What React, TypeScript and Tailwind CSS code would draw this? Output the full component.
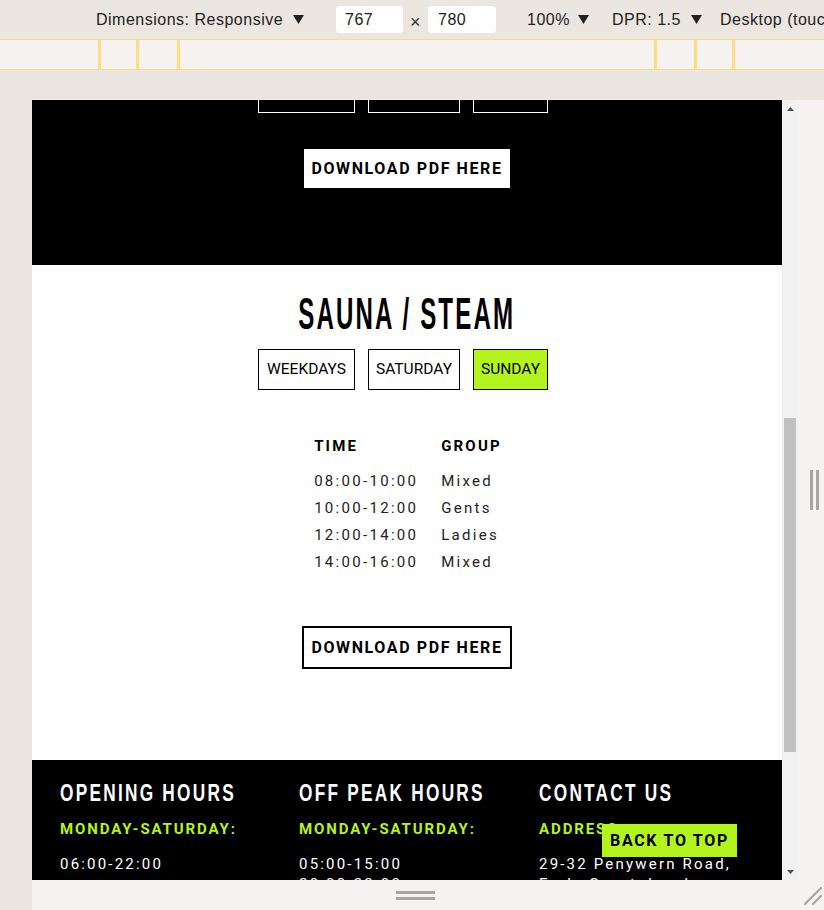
import clsx from 'clsx'

const days = [
  { name: 'WEEKDAYS', w: 'w-[97px]' },
  { name: 'SATURDAY', w: 'w-[92px]' },
  { name: 'SUNDAY', w: 'w-[75px]' },
]

const sessions = [
  { time: '08:00-10:00', group: 'Mixed' },
  { time: '10:00-12:00', group: 'Gents' },
  { time: '12:00-14:00', group: 'Ladies' },
  { time: '14:00-16:00', group: 'Mixed' },
]

function Caret() {
  return (
    <svg width="11" height="9" viewBox="0 0 11 9" className="shrink-0">
      <path d="M0 0 H11 L5.5 9 Z" fill="#222" />
    </svg>
  )
}

function Tabs({ dark, active }: { dark?: boolean; active?: string }) {
  return (
    <div className="flex gap-[13px] -ml-[8px]">
      {days.map(d => (
        <button
          key={d.name}
          className={clsx(
            'h-[41px] border text-[15.5px] leading-none flex items-center justify-center',
            d.w,
            dark ? 'border-white text-white' : 'border-black text-black',
            !dark && d.name === active && 'bg-[#b4f41e]'
          )}
        >
          {d.name}
        </button>
      ))}
    </div>
  )
}

function FooterCol({ title, label, lines, next }: { title: string; label: string; lines: string[]; next?: string }) {
  return (
    <div className="flex flex-col">
      <h3 className="font-['Liberation_Sans',sans-serif] font-bold text-[23px] leading-[23px] tracking-[3px] text-white whitespace-nowrap origin-left scale-x-[0.75]">
        {title}
      </h3>
      <div className="mt-[14px] h-[20px] leading-[20px] text-[15px] font-bold tracking-[1.9px] text-[#b4f41e]">{label}</div>
      <div className="mt-[15px] flex flex-col text-[15px] leading-[20px] tracking-[2.2px] text-white">
        {lines.map(l => (
          <span key={l} className="whitespace-nowrap">{l}</span>
        ))}
      </div>
      {next && (
        <div className="mt-[24px] h-[20px] leading-[20px] text-[15px] font-bold tracking-[1.9px] text-[#b4f41e]">{next}</div>
      )}
    </div>
  )
}

export default function App() {
  return (
    <div className="w-[824px] h-[910px] overflow-hidden bg-[#ece6e0] flex flex-col font-['Liberation_Sans',sans-serif] text-[#222]">
      {/* devtools toolbar */}
      <div className="h-[39px] shrink-0 flex items-center pl-[96px] text-[16px] tracking-[0.5px] whitespace-nowrap">
        <div className="w-[208px] flex items-center gap-[10px] shrink-0">
          <span>Dimensions: Responsive</span>
          <Caret />
        </div>
        <div className="ml-[32px] w-[67px] h-[27px] bg-white rounded-[4px] flex items-center pl-[9px] shrink-0">767</div>
        <span className="w-[25px] text-center text-[18px] leading-none text-[#333] pt-[5px] shrink-0">×</span>
        <div className="w-[68px] h-[27px] bg-white rounded-[4px] flex items-center pl-[10px] shrink-0">780</div>
        <div className="ml-[31px] w-[85px] flex items-center gap-[8px] shrink-0">
          <span>100%</span>
          <Caret />
        </div>
        <div className="w-[108px] flex items-center gap-[10px] shrink-0">
          <span>DPR: 1.5</span>
          <Caret />
        </div>
        <span>Desktop (touch)</span>
      </div>

      {/* ruler */}
      <div className="h-[31px] shrink-0 bg-[#f6f2f1] border-y border-[#f7dc88] flex">
        <div className="ml-[98px] w-[3px] bg-[#fcdf7c]" />
        <div className="ml-[35px] w-[3px] bg-[#fcdf7c]" />
        <div className="ml-[38px] w-[3px] bg-[#fcdf7c]" />
        <div className="ml-[474px] w-[3px] bg-[#fcdf7c]" />
        <div className="ml-[37px] w-[3px] bg-[#fcdf7c]" />
        <div className="ml-[35px] w-[3px] bg-[#fcdf7c]" />
      </div>

      <div className="h-[30px] shrink-0" />

      {/* viewport row */}
      <div className="h-[780px] shrink-0 flex">
        <div className="w-8 shrink-0" />
        <div className="w-[750px] shrink-0 h-full bg-white overflow-hidden relative font-['Roboto',sans-serif]">
          <div className="-mt-[28px]">
            {/* previous timetable, scrolled past */}
            <section className="bg-black pb-[77px] flex flex-col items-center">
              <Tabs dark />
              <button className="mt-[36px] h-[39px] w-[206px] bg-white text-black text-[16px] font-bold tracking-[1.6px]">
                DOWNLOAD PDF HERE
              </button>
            </section>

            {/* sauna / steam */}
            <section className="bg-white h-[495px] pt-[26px] flex flex-col items-center">
              <h2 className="font-['Liberation_Sans',sans-serif] font-bold text-[45px] leading-[45px] tracking-[4px] text-black whitespace-nowrap scale-x-[0.535]">
                SAUNA / STEAM
              </h2>
              <div className="mt-[13px]">
                <Tabs active="SUNDAY" />
              </div>
              <div className="mt-[46px] grid grid-cols-[127px_auto] text-[15px] pl-[2px]">
                <div className="h-[20px] leading-[20px] font-bold tracking-[2.2px] text-black mb-[12px]">TIME</div>
                <div className="h-[20px] leading-[20px] font-bold tracking-[2.2px] text-black mb-[12px]">GROUP</div>
                {sessions.map(s => (
                  <div key={s.time} className="contents">
                    <div className="h-[27px] leading-[27px] tracking-[2.3px] text-[#222]">{s.time}</div>
                    <div className="h-[27px] leading-[27px] tracking-[2.3px] text-[#222]">{s.group}</div>
                  </div>
                ))}
              </div>
              <button className="mt-[50px] h-[43px] w-[210px] border-2 border-black bg-white text-black text-[16px] font-bold tracking-[1.6px]">
                DOWNLOAD PDF HERE
              </button>
            </section>

            {/* footer */}
            <footer className="bg-black h-[260px] pt-[22px] pl-[28px] grid grid-cols-[239px_240px_1fr]">
              <FooterCol title="OPENING HOURS" label="MONDAY-SATURDAY:" lines={['06:00-22:00']} next="SUNDAY:" />
              <FooterCol title="OFF PEAK HOURS" label="MONDAY-SATURDAY:" lines={['05:00-15:00', '20:00-22:00']} />
              <FooterCol title="CONTACT US" label="ADDRESS:" lines={['29-32 Penywern Road,', 'Earls Court, London']} />
            </footer>
          </div>

          <button className="absolute right-[45px] bottom-[23px] h-[33px] w-[135px] bg-[#b4f41e] text-black text-[16px] font-bold tracking-[1.7px]">
            BACK TO TOP
          </button>
        </div>

        {/* scrollbar */}
        <div className="w-4 shrink-0 bg-[#f1f1f1] flex flex-col">
          <div className="h-[17px] flex items-center justify-center">
            <svg width="7" height="4" viewBox="0 0 7 4"><path d="M0 4 L3.5 0 L7 4 Z" fill="#505050" /></svg>
          </div>
          <div className="flex-1">
            <div className="mt-[301px] mx-[2px] h-[334px] bg-[#c1c1c1]" />
          </div>
          <div className="h-[17px] flex items-center justify-center">
            <svg width="7" height="4" viewBox="0 0 7 4"><path d="M0 0 L7 0 L3.5 4 Z" fill="#505050" /></svg>
          </div>
        </div>

        {/* right resize strip */}
        <div className="flex-1 bg-[#f6f2f1] flex items-center pl-[12px]">
          <div className="flex gap-[3px]">
            <div className="w-[3px] h-[40px] bg-[#a6a6a6]" />
            <div className="w-[3px] h-[40px] bg-[#a6a6a6]" />
          </div>
        </div>
      </div>

      {/* bottom resize strip */}
      <div className="flex-1 flex">
        <div className="w-8 shrink-0" />
        <div className="flex-1 bg-[#f6f2f1] flex">
          <div className="w-[766px] flex flex-col items-center justify-center gap-[3px]">
            <div className="w-[39px] h-[3px] bg-[#a6a6a6]" />
            <div className="w-[39px] h-[3px] bg-[#a6a6a6]" />
          </div>
          <div className="flex-1 flex items-center justify-end pr-[2px]">
            <svg width="20" height="20" viewBox="0 0 20 20">
              <path d="M3 19 L19 3 M11 19 L19 11" stroke="#a6a6a6" strokeWidth="2.2" strokeLinecap="round" />
            </svg>
          </div>
        </div>
      </div>
    </div>
  )
}
